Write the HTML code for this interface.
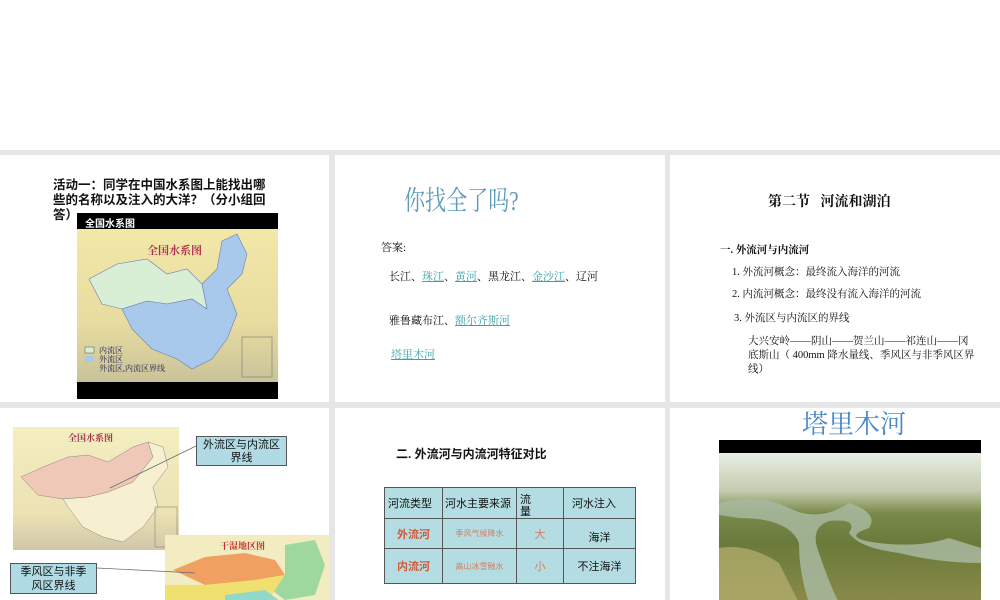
<!DOCTYPE html>
<html><head><meta charset="utf-8"><style>
*{margin:0;padding:0;box-sizing:border-box}
body{width:1000px;height:600px;background:#e6e6e6;position:relative;overflow:hidden;font-family:"Liberation Serif","Noto Serif CJK SC",serif;color:#111}
.top{position:absolute;left:0;top:0;width:1000px;height:150px;background:#fff}
.s{position:absolute;background:#fff;overflow:hidden}
.a{position:absolute;white-space:nowrap}
.sans{font-family:"Liberation Sans","Noto Sans CJK SC",sans-serif}
.lk{color:#3aa3a8;text-decoration:underline}
table{border-collapse:collapse;position:absolute;table-layout:fixed;background:#b3dde2;font-family:"Liberation Sans","Noto Sans CJK SC",sans-serif}
td{border:1px solid #555;font-size:11px;padding:0 3px;vertical-align:middle;white-space:nowrap;overflow:hidden}
</style></head><body>
<div class="top"></div>

<!-- slide 1 -->
<div class="s" style="left:0;top:155px;width:329px;height:247px">
  <div class="a sans" style="left:53px;top:23px;font-size:12.5px;font-weight:bold;line-height:15px;white-space:normal;width:222px;word-break:break-all">活动一：同学在中国水系图上能找出哪些的名称以及注入的大洋？（分小组回答）</div>
  <div class="a" style="left:77px;top:58px;width:201px;height:186px;background:#000">
    <div class="a sans" style="left:8px;top:2px;color:#fff;font-size:10px;font-weight:bold">全国水系图</div>
    <div class="a" style="left:0;top:16px;width:201px;height:153px;background:linear-gradient(#f2e8a8,#e8dca0 60%,#c9c39a)">
      <svg width="201" height="153" style="position:absolute;left:0;top:0">
        <path d="M12,50 L40,35 L70,30 L90,45 L110,40 L125,55 L130,80 L115,70 L90,75 L70,72 L45,80 L25,75 Z" fill="#d8efd6" stroke="#6a7fb0" stroke-width="0.6"/>
        <path d="M145,12 L160,5 L170,25 L165,45 L150,60 L160,85 L150,110 L135,130 L115,140 L100,130 L75,120 L55,100 L45,80 L70,72 L90,75 L115,70 L130,80 L125,55 L140,40 Z" fill="#a8c8ec" stroke="#6a7fb0" stroke-width="0.6"/>
        <text x="70" y="25" font-size="11" fill="#b03050" font-weight="bold" font-family="Noto Serif CJK SC">全国水系图</text>
        <rect x="8" y="118" width="9" height="6" fill="#d8efd6" stroke="#555" stroke-width=".5"/><rect x="8" y="127" width="9" height="6" fill="#a8c8ec"/>
        <text x="22" y="124" font-size="8" fill="#225">内流区</text><text x="22" y="133" font-size="8" fill="#225">外流区</text>
        <text x="22" y="142" font-size="8" fill="#225">外流区,内流区界线</text>
        <rect x="165" y="108" width="30" height="40" fill="none" stroke="#777" stroke-width=".6"/>
      </svg>
    </div>
  </div>
</div>

<!-- slide 2 -->
<div class="s" style="left:335px;top:155px;width:330px;height:247px">
  <div class="a" style="left:69px;top:24px;font-size:27px;color:#5a9bb8;transform:scaleX(0.78);transform-origin:left top;font-family:'Liberation Serif','Noto Serif CJK SC',serif">你找全了吗?</div>
  <div class="a" style="left:46px;top:84px;font-size:11px">答案:</div>
  <div class="a" style="left:54px;top:113px;font-size:11px">长江、<span class="lk">珠江</span>、<span class="lk">黄河</span>、黑龙江、<span class="lk">金沙江</span>、辽河</div>
  <div class="a" style="left:54px;top:157px;font-size:11px">雅鲁藏布江、<span class="lk">额尔齐斯河</span></div>
  <div class="a" style="left:56px;top:191px;font-size:11px"><span class="lk">塔里木河</span></div>
</div>

<!-- slide 3 -->
<div class="s" style="left:670px;top:155px;width:330px;height:247px">
  <div class="a" style="left:98px;top:36px;font-size:14px;font-weight:bold">第二节&nbsp;&nbsp;&nbsp;河流和湖泊</div>
  <div class="a" style="left:50px;top:87px;font-size:10.5px;font-weight:bold">一. 外流河与内流河</div>
  <div class="a" style="left:62px;top:109px;font-size:10.5px">1. 外流河概念：最终流入海洋的河流</div>
  <div class="a" style="left:62px;top:131px;font-size:10.5px">2. 内流河概念：最终没有流入海洋的河流</div>
  <div class="a" style="left:64px;top:155px;font-size:10.5px">3. 外流区与内流区的界线</div>
  <div class="a" style="left:78px;top:180px;font-size:10.5px;line-height:14px;white-space:normal;width:228px;word-break:break-all">大兴安岭——阴山——贺兰山——祁连山——冈底斯山（ 400mm 降水量线、季风区与非季风区界线）</div>
</div>

<!-- slide 4 -->
<div class="s" style="left:0;top:408px;width:329px;height:192px">
  <div class="a" style="left:13px;top:19px;width:166px;height:123px;background:linear-gradient(#f4eec0,#ece2b4 70%,#cfc7a8)">
    <svg width="166" height="123" style="position:absolute;left:0;top:0">
      <path d="M8,50 L30,40 L55,30 L75,28 L95,35 L120,20 L135,15 L140,30 L120,55 L95,65 L75,70 L50,72 L25,68 Z" fill="#f0c8b8" stroke="#888" stroke-width=".5"/>
      <path d="M135,15 L150,20 L155,40 L140,60 L145,80 L130,100 L110,115 L90,110 L70,100 L55,80 L50,72 L75,70 L95,65 L120,55 L140,30 Z" fill="#f6f0d0" stroke="#888" stroke-width=".5"/>
      <text x="55" y="14" font-size="9" fill="#a03050" font-weight="bold" font-family="Noto Serif CJK SC">全国水系图</text>
      <rect x="142" y="80" width="22" height="40" fill="none" stroke="#777" stroke-width=".5"/>
    </svg>
  </div>
  <div class="a" style="left:165px;top:127px;width:165px;height:70px;background:#f2ecc0">
    <svg width="165" height="70" style="position:absolute;left:0;top:0">
      <path d="M8,35 L40,22 L80,18 L110,25 L120,40 L90,45 L40,50 Z" fill="#f0a060"/>
      <path d="M120,10 L150,5 L160,30 L150,60 L120,65 L100,50 L120,40 Z" fill="#9ed89e"/>
      <path d="M0,50 L40,50 L90,45 L120,40 L100,70 L0,70 Z" fill="#f0e070"/>
      <path d="M60,60 L100,55 L120,70 L60,70 Z" fill="#90d8c8"/>
      <text x="55" y="14" font-size="9" fill="#c03030" font-weight="bold" font-family="Noto Serif CJK SC">干湿地区图</text>
    </svg>
  </div>
  <svg width="329" height="192" style="position:absolute;left:0;top:0">
    <line x1="196" y1="38" x2="110" y2="80" stroke="#666" stroke-width=".7"/>
    <line x1="97" y1="160" x2="195" y2="165" stroke="#666" stroke-width=".7"/>
  </svg>
  <div class="a sans" style="left:196px;top:28px;width:91px;height:30px;background:#b0dbe4;border:1px solid #555;font-size:11px;text-align:center;line-height:13px;padding:2px 6px 0;white-space:normal">外流区与内流区界线</div>
  <div class="a sans" style="left:10px;top:155px;width:87px;height:31px;background:#b0dbe4;border:1px solid #555;font-size:11px;text-align:center;line-height:14px;padding:1px 6px 0;white-space:normal">季风区与非季风区界线</div>
</div>

<!-- slide 5 -->
<div class="s" style="left:335px;top:408px;width:330px;height:192px">
  <div class="a sans" style="left:61px;top:37px;font-size:12px;font-weight:bold">二. 外流河与内流河特征对比</div>
  <table style="left:49px;top:79px;width:251px">
    <colgroup><col style="width:58px"><col style="width:74px"><col style="width:47px"><col style="width:72px"></colgroup>
    <tr style="height:28px"><td>河流类型</td><td style="padding:0 2px">河水主要来源</td><td style="line-height:12px;padding-top:6px;vertical-align:top;overflow:visible">流<br>量</td><td style="padding-left:8px">河水注入</td></tr>
    <tr style="height:30px"><td style="color:#d05a3a;font-weight:bold;text-align:center">外流河</td><td style="color:#d08060;font-size:8px;text-align:center">季风气候降水</td><td style="color:#d08060;text-align:center">大</td><td style="text-align:center;padding-top:6px">海洋</td></tr>
    <tr style="height:35px"><td style="color:#d05a3a;font-weight:bold;text-align:center">内流河</td><td style="color:#d08060;font-size:8px;text-align:center">高山冰雪融水</td><td style="color:#d08060;text-align:center">小</td><td style="text-align:center">不注海洋</td></tr>
  </table>
</div>

<!-- slide 6 -->
<div class="s" style="left:670px;top:408px;width:330px;height:192px">
  <div class="a" style="left:132px;top:-4px;font-size:26px;color:#4a88c8;font-family:'Liberation Serif','Noto Serif CJK SC',serif">塔里木河</div>
  <div class="a" style="left:49px;top:32px;width:262px;height:13px;background:#000"></div>
  <div class="a" style="left:49px;top:45px;width:262px;height:150px;background:linear-gradient(#e8eee4 0%,#c4ccb0 25%,#7a8a4a 40%,#6a7a3a 60%,#8a8a4a 100%)">
    <svg width="262" height="150" style="position:absolute;left:0;top:0">
      <path d="M0,50 Q40,40 70,55 T130,50 Q160,60 150,75 Q120,85 160,90 Q200,95 230,85 L262,95 L262,110 Q220,110 180,100 Q140,95 130,80 Q140,65 110,68 Q90,75 100,100 Q110,130 120,150 L90,150 Q80,120 80,90 Q70,65 20,65 L0,62 Z" fill="#a8b8a0" opacity=".85"/>
      <path d="M0,95 Q30,90 60,110 L80,150 L0,150 Z" fill="#b8b070" opacity=".7"/>
    </svg>
  </div>
</div>
</body></html>
